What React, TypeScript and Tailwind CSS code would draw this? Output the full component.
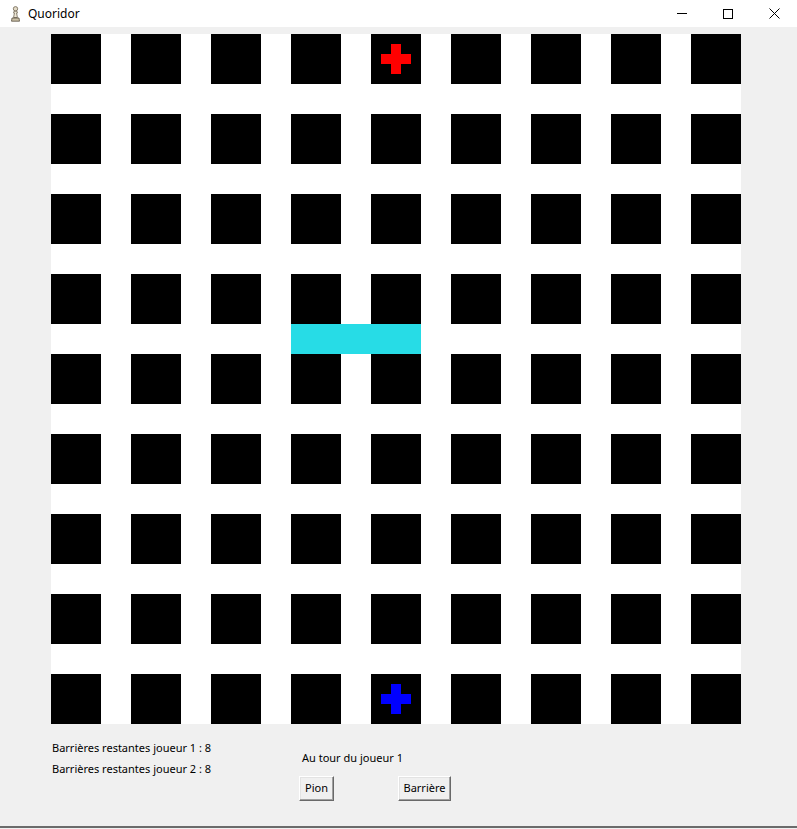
import React from "react";

const N = 9;

function Cross({ color }: { color: string }) {
  return (
    <div className="relative w-[30px] h-[30px]">
      <div className={`absolute left-[10px] top-0 w-[10px] h-[30px] ${color}`} />
      <div className={`absolute left-0 top-[10px] w-[30px] h-[10px] ${color}`} />
    </div>
  );
}

function WinButton({ label, className }: { label: string; className?: string }) {
  return (
    <div
      className={`h-[25px] flex items-center justify-center bg-[#f0f0f0] border border-t-white border-l-white border-r-[#696969] border-b-[#696969] shadow-[inset_-1px_-1px_0_#a0a0a0,inset_1px_1px_0_#e3e3e3] text-[11px] text-black ${className ?? ""}`}
    >
      {label}
    </div>
  );
}

export default function App() {
  const cells = [];
  for (let r = 0; r < N; r++) {
    for (let c = 0; c < N; c++) {
      let content: React.ReactNode = null;
      if (r === 0 && c === 4) content = <Cross color="bg-[#ff0000]" />;
      if (r === 8 && c === 4) content = <Cross color="bg-[#0000ff]" />;
      cells.push(
        <div key={`${r}-${c}`} className="w-[50px] h-[50px] bg-black flex items-center justify-center">
          {content}
        </div>
      );
    }
  }

  return (
    <div
      className="w-[797px] h-[829px] bg-[#f0f0f0] flex flex-col overflow-hidden"
      style={{ fontFamily: '"Noto Sans", "Open Sans", sans-serif' }}
    >
      {/* Title bar */}
      <div className="h-[27px] bg-white flex items-center shrink-0">
        <svg width="9" height="16" viewBox="0 0 9 16" className="ml-[11px] mr-[8px]">
          <circle cx="4.5" cy="2.8" r="2.2" fill="#e2dac6" stroke="#6d6350" strokeWidth="0.8" />
          <path d="M3 5.2 L6 5.2 L6.4 7 L5.6 7 L6.4 11.5 L2.6 11.5 L3.4 7 L2.6 7 Z" fill="#ece6d6" stroke="#6d6350" strokeWidth="0.8" />
          <path d="M1 12 L8 12 L8.5 15.2 L0.5 15.2 Z" fill="#c9bfa6" stroke="#5a5242" strokeWidth="0.8" />
        </svg>
        <span className="text-[12px] text-black">Quoridor</span>
        <div className="flex-1" />
        <div className="w-[46px] h-[27px] flex items-center justify-center">
          <div className="w-[10px] h-px bg-black" />
        </div>
        <div className="w-[46px] h-[27px] flex items-center justify-center">
          <div className="w-[10px] h-[10px] border border-black" />
        </div>
        <div className="w-[46px] h-[27px] flex items-center justify-center">
          <svg width="11" height="11" viewBox="0 0 11 11">
            <path d="M0.5 0.5 L10.5 10.5 M10.5 0.5 L0.5 10.5" stroke="black" strokeWidth="1" />
          </svg>
        </div>
      </div>

      {/* Board */}
      <div className="ml-[51px] mt-[7px] relative w-[690px] h-[690px] bg-white shrink-0">
        <div className="grid grid-cols-9 gap-[30px]">{cells}</div>
        <div className="absolute left-[240px] top-[290px] w-[130px] h-[30px] bg-[#27dce6]" />
      </div>

      {/* Bottom controls */}
      <div className="flex flex-1 text-[11px] text-black">
        <div className="ml-[52px] w-[247px] shrink-0 mt-[16px] flex flex-col gap-[5px] leading-[16px]">
          <span>Barrières restantes joueur 1 : 8</span>
          <span>Barrières restantes joueur 2 : 8</span>
        </div>
        <div className="flex flex-col">
          <span className="ml-[3px] mt-[26px] leading-[16px]">Au tour du joueur 1</span>
          <div className="flex mt-[10px]">
            <WinButton label="Pion" className="w-[35px]" />
            <WinButton label="Barrière" className="w-[53px] ml-[64px]" />
          </div>
        </div>
      </div>
      <div className="h-[2px] bg-[#6b6b6b] shrink-0" />
      <div className="h-px bg-[#f0f0f0] shrink-0" />
    </div>
  );
}
